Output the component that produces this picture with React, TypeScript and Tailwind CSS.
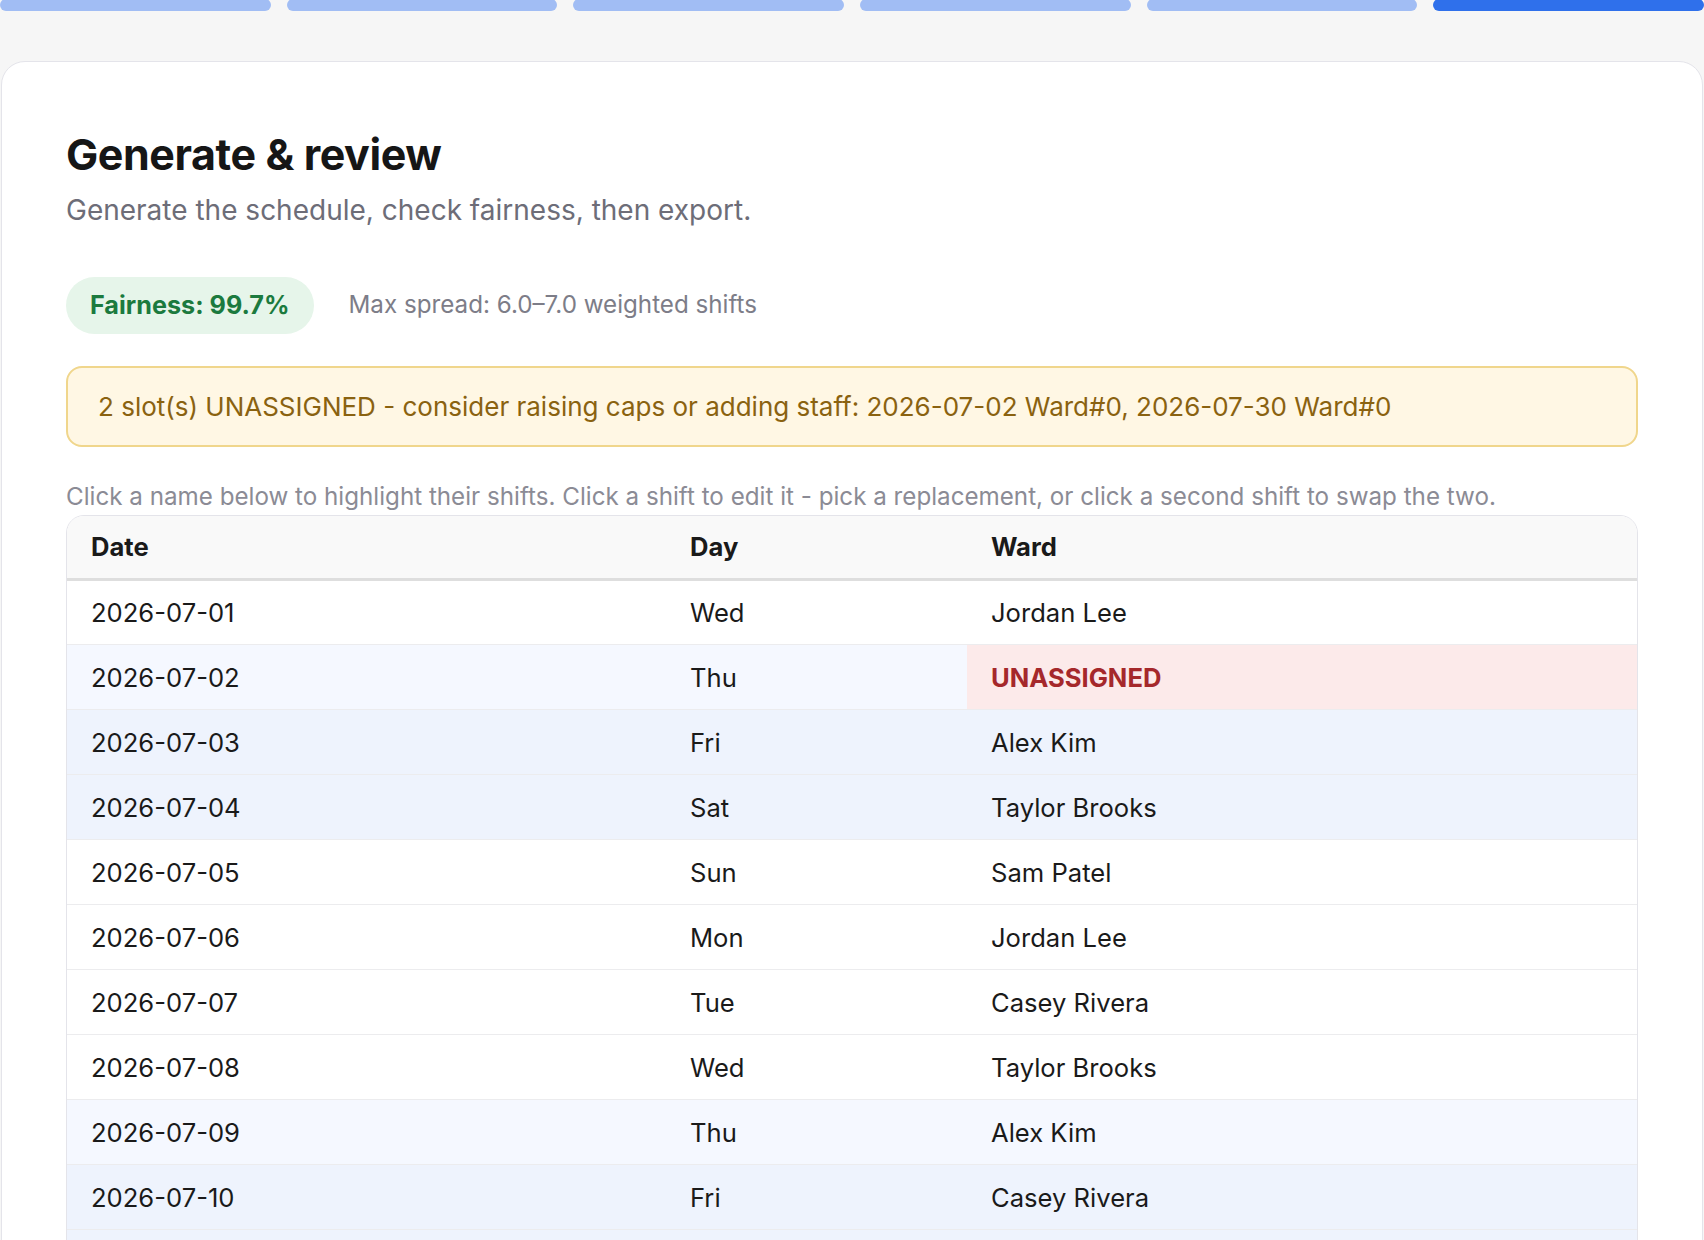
import React from "react";

type Row = {
  date: string;
  day: string;
  name: string | null;
};

const rows: Row[] = [
  { date: "2026-07-01", day: "Wed", name: "Jordan Lee" },
  { date: "2026-07-02", day: "Thu", name: null },
  { date: "2026-07-03", day: "Fri", name: "Alex Kim" },
  { date: "2026-07-04", day: "Sat", name: "Taylor Brooks" },
  { date: "2026-07-05", day: "Sun", name: "Sam Patel" },
  { date: "2026-07-06", day: "Mon", name: "Jordan Lee" },
  { date: "2026-07-07", day: "Tue", name: "Casey Rivera" },
  { date: "2026-07-08", day: "Wed", name: "Taylor Brooks" },
  { date: "2026-07-09", day: "Thu", name: "Alex Kim" },
  { date: "2026-07-10", day: "Fri", name: "Casey Rivera" },
  { date: "2026-07-11", day: "Sat", name: "Sam Patel" },
];

const steps = [false, false, false, false, false, true];

// Thu is weighted a bit, Fri/Sat count as weekend
const rowBg = (day: string) => {
  if (day === "Fri" || day === "Sat") return "bg-[#eef3fd]";
  if (day === "Thu") return "bg-[#f5f8ff]";
  return "bg-white";
};

const App: React.FC = () => {
  return (
    <div className="min-h-[1240px] bg-[#f6f6f6] font-['Inter',sans-serif] text-[#1a1a1a]">
      {/* step bar */}
      <div className="flex gap-4 -mt-px">
        {steps.map((active, i) => (
          <div
            key={i}
            className={
              active
                ? "h-[12px] flex-1 rounded-full bg-[#2f70eb]"
                : "h-[12px] flex-1 rounded-full bg-[#a1bdf4]"
            }
          />
        ))}
      </div>

      <div className="px-px mt-[50px]">
        <div className="bg-white border border-[#e4e4ea] rounded-[24px] px-16 pt-[66px] pb-10">
          <h1 className="text-[43px] leading-[52px] font-bold tracking-[-0.01em] text-[#161616]">
            Generate &amp; review
          </h1>
          <p className="mt-[10px] text-[28px] leading-[40px] text-[#6d6d78]">
            Generate the schedule, check fairness, then export.
          </p>

          {/* fairness */}
          <div className="flex items-center gap-[35px] mt-[47px]">
            <div className="h-[57px] px-6 flex items-center rounded-full bg-[#e6f5ea] text-[25.2px] font-bold text-[#1b7a3e]">
              Fairness: 99.7%
            </div>
            <div className="text-[24.2px] text-[#7d7d88]">
              Max spread: 6.0–7.0 weighted shifts
            </div>
          </div>

          {/* warning */}
          <div className="mt-[32px] h-[81px] flex items-center px-[30px] rounded-[16px] border-2 border-[#f0d68c] bg-[#fff7e4] text-[26px] text-[#8a6210]">
            2 slot(s) UNASSIGNED - consider raising caps or adding staff: 2026-07-02 Ward#0, 2026-07-30 Ward#0
          </div>

          <p className="mt-[32px] text-[24.2px] leading-[36px] text-[#8b8b95]">
            Click a name below to highlight their shifts. Click a shift to edit it - pick a replacement, or click a second shift to swap the two.
          </p>

          {/* schedule table */}
          <div className="border border-[#e4e4ea] rounded-t-[18px] overflow-hidden">
            <table className="w-full table-fixed border-collapse text-[25.6px]">
              <colgroup>
                <col className="w-[599px]" />
                <col className="w-[301px]" />
                <col />
              </colgroup>
              <thead>
                <tr className="bg-[#f9f9f9] border-b-[3px] border-[#dedede]">
                  <th className="h-[63px] px-6 text-left font-bold">Date</th>
                  <th className="h-[63px] px-6 text-left font-bold">Day</th>
                  <th className="h-[63px] px-6 text-left font-bold">Ward</th>
                </tr>
              </thead>
              <tbody>
                {rows.map((r) => (
                  <tr key={r.date} className={`${rowBg(r.day)} border-b border-[#ececee]`}>
                    <td className="h-[65px] px-6 pt-[3px]">{r.date}</td>
                    <td className="h-[65px] px-6 pt-[3px]">{r.day}</td>
                    {r.name ? (
                      <td className="h-[65px] px-6 pt-[3px]">{r.name}</td>
                    ) : (
                      <td className="h-[65px] px-6 pt-[3px] bg-[#fceaea] font-bold text-[#a5282b]">
                        UNASSIGNED
                      </td>
                    )}
                  </tr>
                ))}
              </tbody>
            </table>
          </div>
        </div>
      </div>
    </div>
  );
};

export default App;
